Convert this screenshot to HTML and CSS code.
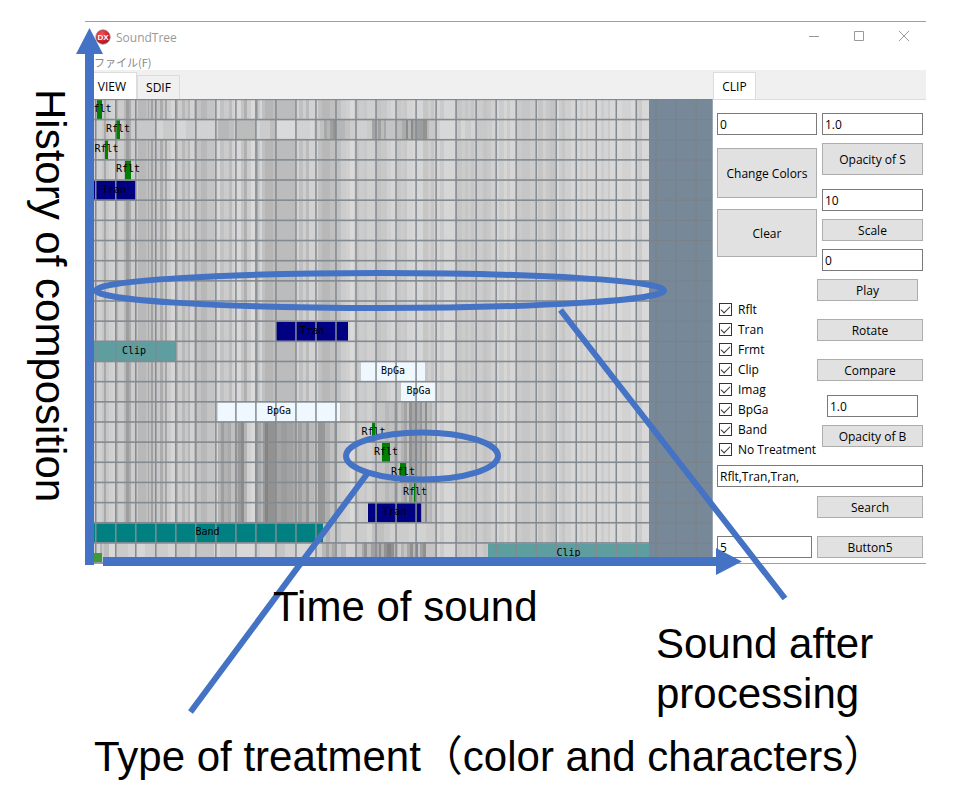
FILE: index.html
```html
<!DOCTYPE html>
<html lang="en">
<head>
<meta charset="utf-8">
<title>SoundTree</title>
<link rel="stylesheet" href="styles.css">
</head>
<body>
<main class="figure">
  <div class="stage">
    <p class="caption axis">History of composition</p>
    <section class="window">
      <header class="titlebar">
        <svg class="logo" viewBox="0 0 16 16" aria-hidden="true">
          <defs><radialGradient id="red" cx="40%" cy="30%" r="75%"><stop offset="0" stop-color="#f0545c"/><stop offset="0.6" stop-color="#d8202c"/><stop offset="1" stop-color="#8c1820"/></radialGradient></defs>
          <circle cx="8" cy="8" r="7.2" fill="url(#red)" stroke="#9a8080" stroke-width="0.8"/>
          <text x="8" y="10.5" text-anchor="middle" class="logo-text">DX</text>
        </svg>
        <h1 class="title">SoundTree</h1>
        <button class="winbtn" aria-label="Minimize"><svg viewBox="0 0 12 12"><path d="M1 6.5H11"/></svg></button>
        <button class="winbtn" aria-label="Maximize"><svg viewBox="0 0 12 12"><path d="M1.500 1.500H10.500V10.500H1.500Z"/></svg></button>
        <button class="winbtn" aria-label="Close"><svg viewBox="0 0 12 12"><path d="M1 1L11 11M11 1L1 11"/></svg></button>
      </header>
      <nav class="menu"><a href="#file">ファイル(F)</a></nav>
      <div class="work">
        <div class="view">
          <div class="tabs">
            <button class="tab active">VIEW</button>
            <button class="tab">SDIF</button>
          </div>
          <svg id="chart" class="chart" viewBox="85 99 628 464" role="img" aria-label="Sound history"></svg>
        </div>
        <form class="panel">
          <div class="tabs">
            <button type="button" class="tab active">CLIP</button>
          </div>
          <div class="controls">
            <div class="columns">
              <div class="left">
                <input class="field" aria-label="Color" value="0">
                <button type="button" class="btn tall first">Change Colors</button>
                <button type="button" class="btn tall">Clear</button>
                <div class="checks">
                  <label><input type="checkbox" checked>Rflt</label>
                  <label><input type="checkbox" checked>Tran</label>
                  <label><input type="checkbox" checked>Frmt</label>
                  <label><input type="checkbox" checked>Clip</label>
                  <label><input type="checkbox" checked>Imag</label>
                  <label><input type="checkbox" checked>BpGa</label>
                  <label><input type="checkbox" checked>Band</label>
                  <label><input type="checkbox" checked>No Treatment</label>
                </div>
              </div>
              <div class="right">
                <input class="field inset" aria-label="Opacity of S value" value="1.0">
                <button type="button" class="btn medium inset">Opacity of S</button>
                <input class="field inset gap-l" aria-label="Scale value" value="10">
                <button type="button" class="btn inset">Scale</button>
                <input class="field inset" aria-label="Play position" value="0">
                <button type="button" class="btn short">Play</button>
                <button type="button" class="btn gap-xl">Rotate</button>
                <button type="button" class="btn gap-xl">Compare</button>
                <input class="field narrow gap-l" aria-label="Opacity of B value" value="1.0">
                <button type="button" class="btn inset">Opacity of B</button>
              </div>
            </div>
            <input class="field query" aria-label="Search pattern" value="Rflt,Tran,Tran,">
            <button type="button" class="btn search">Search</button>
            <div class="last">
              <input class="field" aria-label="Count" value="5">
              <button type="button" class="btn">Button5</button>
            </div>
          </div>
        </form>
      </div>
    </section>
  </div>
  <div class="notes">
    <p class="caption time">Time of sound</p>
    <p class="caption after">Sound after<br>processing</p>
  </div>
  <p class="caption type">Type of treatment（color and characters）</p>
  <svg class="marks" viewBox="0 0 972 809" aria-hidden="true">
    <path class="solid" d="M89.500 28L103 54H94V565H85V54H76Z"/>
    <path class="solid" d="M103 557H716V548L742 561.500L716 575V566H103Z"/>
    <ellipse cx="380" cy="290.500" rx="284" ry="17.500"/>
    <ellipse cx="422" cy="456" rx="76" ry="23.500"/>
    <path d="M560.500 310L785 598.500M367 474L190.500 712"/>
  </svg>
</main>
<script src="chart.js"></script>
</body>
</html>
```
FILE: styles.css
```css
* { box-sizing: border-box; }
body { margin: 0; background: #fff; color: #000; font-family: "Open Sans", "Noto Sans CJK JP", sans-serif; font-size: 12px; }
p, h1 { margin: 0; }
button, input { font: inherit; color: inherit; }

.figure { position: relative; padding-top: 21px; }
.stage { display: grid; grid-template-columns: 85px minmax(0, 1fr); padding-right: 46px; }
.caption { font-family: "Liberation Sans", "Noto Sans CJK JP", sans-serif; font-size: 42px; line-height: 50px; }
.axis { writing-mode: vertical-rl; white-space: nowrap; padding: 68px 10px 0 0; justify-self: end; }

.window { border-top: 1px solid #a0a0a0; border-bottom: 1px solid #a0a0a0; }
.titlebar { display: flex; align-items: center; height: 30px; padding-left: 10px; }
.logo { width: 16px; height: 16px; }
.logo-text { font: bold 8px "Liberation Sans", sans-serif; fill: #fff; }
.title { flex: 1; margin-left: 5px; font-size: 12px; font-weight: 400; color: #999; }
.winbtn { width: 45px; height: 30px; padding: 0; border: 0; background: none; }
.winbtn svg { width: 12px; height: 12px; fill: none; stroke: #999; stroke-width: 1; }
.menu { height: 18px; padding-left: 9px; line-height: 20px; font-family: "Noto Sans CJK JP", sans-serif; font-size: 11px; }
.menu a { display: inline-block; color: #888; text-decoration: none; }

.work { display: flex; background: #f0f0f0; }
.view { flex: 1; min-width: 0; }
.view .tabs { padding-left: 2px; }
.tabs { display: flex; align-items: flex-end; height: 29px; }
.tab { width: 43px; height: 24px; padding: 0; border: 1px solid #dcdcdc; border-bottom: 0; background: #f0f0f0; }
.tab.active { height: 27px; background: #fff; }
.view .tab.active { width: 50px; }
.chart { display: block; width: 100%; background: #789; }
.chart text { font: 10px "DejaVu Sans Mono", monospace; text-anchor: middle; }

.panel { display: flex; flex-direction: column; width: 213px; }
.controls { flex: 1; padding: 13px 3px 0 4px; background: #fff; border-top: 1px solid #dcdcdc; }
.columns { display: flex; }
.left { width: 100px; }
.right { display: flex; flex-direction: column; align-items: flex-start; gap: 8px; width: 106px; }
.field { display: block; width: 100px; height: 22px; padding: 0 2px; border: 1px solid #7a7a7a; border-radius: 0; background: #fff; }
.btn { display: block; width: 106px; height: 22px; padding: 0; border: 1px solid #adadad; border-radius: 0; background: #e1e1e1; }
.left .btn { width: 100px; }
.right .inset { width: 101px; margin-left: 5px; }
.right .narrow { width: 91px; margin-left: 10px; }
.right .short { width: 101px; }
.right .gap-l { margin-top: 6px; }
.right .gap-xl { margin-top: 10px; }
.tall { height: 48px; margin-top: 11px; }
.tall.first { height: 50px; margin-top: 13px; }
.medium { height: 32px; }
.checks { padding-top: 42px; }
.checks label { display: flex; align-items: center; gap: 6px; height: 20px; white-space: nowrap; }
.checks input { appearance: none; width: 13px; height: 13px; margin: 0 0 0 2px; border: 1px solid #333; background: #fff; display: grid; place-items: center; }
.checks input:checked::before { content: ""; width: 8px; height: 4px; border: solid #333; border-width: 0 0 1px 1px; transform: translateY(-1px) rotate(-45deg); }
.query { width: 206px; margin-top: 6px; }
.search { margin: 9px 0 0 100px; }
.last { display: flex; gap: 5px; margin-top: 18px; }
.last .field { width: 95px; }

.notes { position: relative; z-index: 2; display: grid; grid-template-columns: 656fr 316fr; padding-top: 18px; }
.time { padding-left: 273px; }
.after { padding-top: 37px; }
.type { position: relative; z-index: 2; margin: 13px 0 0 94px; white-space: nowrap; }
.marks { position: absolute; top: 0; left: 0; z-index: 1; width: 100%; pointer-events: none; fill: none; stroke: #4472c4; stroke-width: 6; }
.marks .solid { fill: #4472c4; stroke: none; }
```
FILE: chart.js
```js
const NS = "http://www.w3.org/2000/svg";
const chart = document.getElementById("chart");
const LEFT = 85, TOP = 99, END = 649, RIGHT = 713, BOTTOM = 563;
const COL = 20.02, ROW = 20.16, ROWS = 23;

function add(tag, attrs, text) {
  const node = document.createElementNS(NS, tag);
  for (const key in attrs) node.setAttribute(key, attrs[key]);
  if (text) node.textContent = text;
  chart.appendChild(node);
}
function rect(x, y, width, height, fill) { add("rect", { x, y, width, height, fill }); }

// Each band list holds "start:grey" pairs; a band runs to the next start.
function bands(spec, end, firstRow, lastRow) {
  const list = spec.trim().split(/\s+/).map(s => s.split(":"));
  const y = TOP + firstRow * ROW, h = (lastRow - firstRow + 1) * ROW;
  list.forEach(([x, g], i) => {
    const next = i + 1 < list.length ? +list[i + 1][0] : end;
    rect(+x, y, next - x, h, "#" + g + g + g);
  });
}

const base = `85:d0 102:c6 104:a8 106:c8 109:d0 113:d4 116:b8 118:cc 124:b8 126:9e 129:ac 131:cc 136:ca
138:b8 146:c0 148:aa 149:c0 151:a2 153:c4 156:c8 160:ac 163:c8 165:a6 167:cc 171:d6 175:b8 178:cc 182:b8 185:c8
188:b6 190:d2 194:ba 196:c2 201:b8 207:c4 214:c8 216:d6 220:c2 224:cb 229:bc 232:d0 234:d8 241:c4 244:b0 247:cc
251:da 256:aa 258:c8 260:d6 262:c0 265:b6 273:be 277:bc 295:d2 299:c0 303:ce 306:bb 309:d2 315:d6 318:c0 322:b8
330:c0 336:c0 341:cc 346:d0 350:da 354:d0 356:c6 359:cc 364:c8 367:d0 376:c4 381:c8 387:d0 391:d6 397:c8 401:cc
404:c8 407:d4 413:d8 417:d6 423:c6 428:ce 431:c6 434:d4 440:ca 444:d6 455:c6 462:cc 465:c6 468:cc 471:c6 474:d0
477:cc 483:c4 487:c8 491:d0 495:d6 499:cc 504:d6 507:cb 510:d6 516:ca 522:c6 530:cc 535:d4 538:c6 543:d0 546:c8
550:c4 555:d8 559:cc 562:c6 565:cf 571:d6 575:d6 580:cc 583:d6 586:ca 588:d4 595:d6 601:cc 604:d4 608:ca 610:d8
622:d2 631:da 635:d0 639:ca 642:d8`;
bands(base, END, 0, ROWS - 1);
bands(`136:c8 155:d4 163:ca 174:d6 186:cc 196:d2 218:b8 229:bf 234:d0 236:bc 256:d4 260:cc 270:bf 276:da
295:d2 310:d8 314:cc 320:c0 324:a8 327:b6 330:a0 333:94 336:b6 345:c2 350:cc 356:d0 367:ca 372:a4 376:b6 378:a0
381:bc 384:a8 386:c4 396:bc 402:ac 406:8c 408:b4 411:8a 413:a8 417:9e 423:92 427:b8 429:c8 436:d0 440:d8
455:ce 458:c8 461:d6 465:cc 471:d4 477:c8 487:cc 492:d4`, 498, 1, 1);
bands(`401:b4 404:a4 407:c0 409:92 412:a6 415:8e 417:aa 420:98 422:b8 425:8e 427:bc 430:b4 432:c8`, 437, 15, 22);
bands(`372:c8 378:c4 385:b8 389:c0 394:b0 398:c4`, 401, 15, 20);
bands(`218:b4 221:9e 224:b2 228:aa 231:c0 235:b0 238:9a 241:8c 244:b4 247:d0 251:d8 255:9a 258:aa 261:b8 263:9a
265:84 268:92 275:a4 281:9c 287:a2 293:a8 295:b8 298:a0 302:b0 306:98 309:b8 314:c0 318:96 322:98 325:b0 330:c0
334:a8 337:c8`, 341, 16, 20);
bands(`322:c4 326:b6 330:c8 336:c4 341:d0 356:cc 367:d4 372:c0 384:c8 390:d0 396:cc 409:d2 426:cc`, 437, 21, 21);
bands(`85:d4 100:b4 102:c8 104:bc 109:d8 116:ca 128:d2 136:d6 145:cc 156:cc 168:d4 175:c8 190:d2 196:c4 214:d6
220:cc 234:d8 254:cc 260:d4 276:c4 285:d0 295:d6 315:d0 322:b8 326:a4 329:bc 332:a8 335:c8 341:b8 346:d2 356:c4
362:a8 364:94 367:bc 371:a0 376:aa 379:8c 381:b0 384:92 387:84 391:90 394:b8 398:cc 401:b4 404:c4 407:a8 410:90
413:b8 416:8a 418:c4 420:a0 423:90 426:c4`, 437, 22, 22);

// kind, row, start, end
const colors = { Rflt: "#008000", Tran: "#000080", Clip: "#5f9ea0", BpGa: "#f0f8ff", Band: "#008080" };
const clips = [
  ["Rflt", 0, 97, 102], ["Rflt", 1, 116, 120], ["Rflt", 2, 105, 108], ["Rflt", 3, 125, 131],
  ["Tran", 4, 92, 136], ["Tran", 11, 276, 348], ["Clip", 12, 92, 176], ["BpGa", 13, 361, 425],
  ["BpGa", 14, 401, 436], ["BpGa", 15, 218, 340], ["Rflt", 16, 372, 375], ["Rflt", 17, 382, 390],
  ["Rflt", 18, 400, 406], ["Rflt", 19, 414, 416], ["Tran", 20, 368, 421], ["Band", 21, 92, 323],
  ["Clip", 22, 488, 649]
];
for (const [kind, row, from, to] of clips) {
  rect(from, TOP + row * ROW + 1, to - from, ROW - 1, colors[kind]);
}

for (let i = 0; i <= ROWS; i++) {
  const y = TOP + i * ROW;
  rect(LEFT, y - 0.4, END - LEFT, 1.6, "#838a90");
  rect(END, y, RIGHT - END, 1, "#7a828a");
}
for (let x = 95; x < RIGHT; x += COL) {
  const past = x > END;
  rect(x, TOP, past ? 1 : 1.5, BOTTOM - TOP, past ? "#7c8287" : "#838a90");
}
rect(RIGHT - 1, TOP, 1, BOTTOM - TOP, "#9aa8b4");
rect(94, 553, 8, 9, "#3c9c3c");

for (const [kind, row, from, to] of clips) {
  add("text", { x: (from + to) / 2, y: TOP + row * ROW + 13 }, kind);
}
```
